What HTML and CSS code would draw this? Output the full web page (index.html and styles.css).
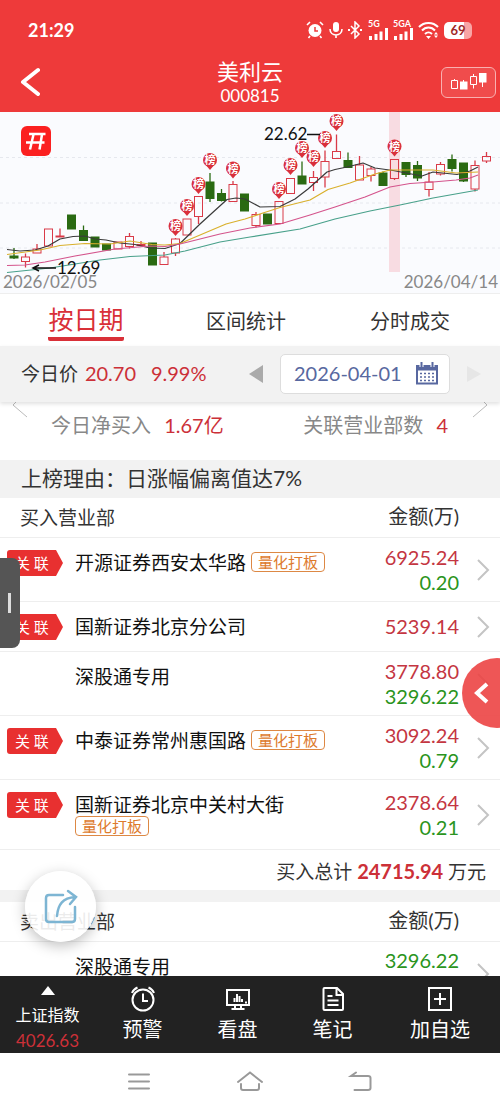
FILE: index.html
```html
<!DOCTYPE html>
<html lang="zh-CN">
<head>
<meta charset="utf-8">
<meta name="viewport" content="width=device-width, initial-scale=1">
<title>美利云 000815</title>
<link rel="stylesheet" href="styles.css">
</head>
<body>
<div class="app">
  <header class="top">
    <div class="status">
      <span class="clock">21:29</span>
      <div class="status-icons">
        <svg width="18" height="18" viewBox="0 0 18 18"><circle cx="9" cy="9.5" r="6.5" fill="#fff"/><path d="M1 4l3-3M17 4l-3-3M4 15l-1.500 2M14 15l1.500 2" stroke="#fff" stroke-width="1.600"/><path d="M9 6v4h3" fill="none" stroke="#ee3a3a" stroke-width="1.500"/></svg>
        <svg width="14" height="18" viewBox="0 0 14 18"><rect x="4" y="1" width="6" height="10" rx="3" fill="#fff"/><path d="M1 8c0 8 12 8 12 0M7 14v3" fill="none" stroke="#fff" stroke-width="1.600"/></svg>
        <svg width="15" height="18" viewBox="0 0 15 18"><path d="M3 5l8 8-4 4V1l4 4-8 8" fill="none" stroke="#fff" stroke-width="1.500"/><path d="M0 9h2M12 9h2" stroke="#fff" stroke-width="2"/></svg>
        <div class="signal"><span>5G</span><svg width="20" height="12" viewBox="0 0 20 12"><path d="M2.500 12V8M8 12V6M13 12V3.500M18.500 12V0" stroke="#fff" stroke-width="3"/></svg></div>
        <div class="signal"><span>5GA</span><svg width="20" height="12" viewBox="0 0 20 12"><path d="M2.500 12V8M8 12V6M13 12V3.500M18.500 12V0" stroke="#fff" stroke-width="3"/></svg></div>
        <svg width="21" height="18" viewBox="0 0 21 18"><path d="M1 6c5-5.500 14-5.500 19 0M4 9.500c3.500-4 9.500-4 13 0M7 13c2-2 5-2 7 0" fill="none" stroke="#fff" stroke-width="2"/><path d="M8 15h5l-2.500 3zM16 13.500l2-2.500 2 2.500zM16 14.500l2 2.500 2-2.500z" fill="#fff"/></svg>
        <span class="battery">69</span>
      </div>
    </div>
    <div class="title-bar">
      <button class="back" aria-label="返回"><svg width="22" height="30" viewBox="0 0 22 30"><path d="M20 3L5 15l15 12" fill="none" stroke="#fff" stroke-width="4" stroke-linecap="round" stroke-linejoin="round"/></svg></button>
      <div class="title">
        <h1>美利云</h1>
        <p>000815</p>
      </div>
      <button class="kline" aria-label="K线"><svg width="38" height="20" viewBox="0 0 38 20"><path d="M1.500 8.500h6v8h-6zM20.500 4.500h6v8h-6zM4.500 7v2M23.500 2v2M23.500 12.500v4M32.500 10v5M13.500 8v2" fill="none" stroke="#fff"/><path d="M10 9.500h7.500v8H10zM29 1h7.500v9.500H29z" fill="#fff"/></svg></button>
    </div>
  </header>

  <svg class="chart" id="chart" viewBox="0 0 500 181">
    <path class="grid" d="M0 45.500H500M0 91H500M0 136H500"/>
    <rect x="389" y="0" width="11" height="160" fill="#f8dce2"/>
    <g id="candles"></g>
    <path class="ma" stroke="#3a3a3a" d="M7 137.500L20 139 35 138 48 134 60 127 73 124.500 85 124 95 127 106 128 120 131 135 132.500 150 136 165 136.500 180 131.500 200 112 227 87.500 236 86 245 87 260 95 280 94.500 295 87 308 77 327 60 335 57.500 347 55 363 51 375 56 393 58.500 422 64 433 60 457 62.500 470 59 478 55"/>
    <path class="ma" stroke="#d9b02c" d="M7 142.500L40 138 60 133.500 85 131.500 110 132 130 129 152 132.500 165 133 180 131.500 226 112 245 107 263 101 280 95.500 310 88 328 77.500 350 71 375 62 390 58 433 58 456 61 478 60"/>
    <path class="ma" stroke="#d4548c" d="M7 153.500L25 153 45 150 75 144 115 137 150 134 165 134.500 180 132 220 122 250 116 280 112 310 103 335 95 365 85 390 75 410 71.500 433 70 456 68 470 66 478 63"/>
    <path class="ma" stroke="#48a08a" d="M7 160.500L50 156 100 148 130 144.500 165 143 185 139 220 130 250 125 300 117 335 107 370 99 400 93 433 86 478 78"/>
    <g id="pins"></g>
    <path d="M307 22.500H320M56 156H34M39 153l-6 3 6 3" fill="none" stroke="#111" stroke-width="1.500"/>
    <text class="mark" x="264" y="28">22.62</text>
    <text class="mark" x="57" y="162">12.69</text>
    <text class="date" x="3" y="176">2026/02/05</text>
    <text class="date" x="498" y="176" text-anchor="end">2026/04/14</text>
    <rect x="21" y="14" width="30" height="30" rx="6" fill="#fb2020"/>
    <path d="M29 22H45.500M26 30.500H44.500M33.500 22.500L30 37.500M42 22.500l-2.500 15" fill="none" stroke="#fff" stroke-width="2.500"/>
  </svg>

  <nav class="tabs">
    <button class="tab active">按日期</button>
    <button class="tab">区间统计</button>
    <button class="tab">分时成交</button>
  </nav>

  <div class="price-bar">
    <span class="today">今日价 <b>20.70</b> <b class="rate">9.99%</b></span>
    <button class="step" aria-label="前一天"><svg width="16" height="20" viewBox="0 0 16 20"><path d="M15 1v18L1 10z" fill="#aaa"/></svg></button>
    <label class="date-box">
      <input type="text" value="2026-04-01" aria-label="日期">
      <svg width="24" height="24" viewBox="0 0 24 24"><path d="M1 3h22v19.500H1z" fill="#5868a0"/><path d="M3 8.500h18v12H3z" fill="#fff"/><path d="M6.500 0v5M17.500 0v5" stroke="#fff" stroke-width="4"/><path d="M6.500 0v5M17.500 0v5" stroke="#5868a0" stroke-width="2"/><path d="M5 11.500h14M5 15h14M5 18.500h14" stroke="#5868a0" stroke-width="1.500" stroke-dasharray="2 2"/></svg>
    </label>
    <button class="step" aria-label="后一天"><svg width="16" height="20" viewBox="0 0 16 20"><path d="M1 2v16l14-8z" fill="#e6e6e6"/></svg></button>
  </div>

  <main class="content">
    <div class="stats">
      <svg width="16" height="16" viewBox="0 0 16 16"><path d="M4 0L1 3l14 12" fill="none" stroke="#bbb"/></svg>
      <span class="net">今日净买入 <b>1.67亿</b></span>
      <span class="count">关联营业部数 <b>4</b></span>
      <svg width="16" height="16" viewBox="0 0 16 16"><path d="M12 0l3 3L1 15" fill="none" stroke="#bbb"/></svg>
    </div>
    <h2 class="reason">上榜理由：日涨幅偏离值达7%</h2>

    <table class="list">
      <colgroup><col class="col-rel"><col><col class="col-amount"><col class="col-more"></colgroup>
      <thead>
        <tr><th colspan="2">买入营业部</th><th class="amount">金额(万)</th><th></th></tr>
      </thead>
      <tbody>
        <tr>
          <td class="rel"><span class="flag">关 联</span></td>
          <td class="name">开源证券西安太华路 <span class="tag">量化打板</span></td>
          <td class="amount"><span class="buy">6925.24</span><span class="sell">0.20</span></td>
          <td class="more"><svg width="14" height="24" viewBox="0 0 14 24"><path d="M2 2l10 10L2 22"/></svg></td>
        </tr>
        <tr class="single">
          <td class="rel"><span class="flag">关 联</span></td>
          <td class="name">国新证券北京分公司</td>
          <td class="amount"><span class="buy">5239.14</span></td>
          <td class="more"><svg width="14" height="24" viewBox="0 0 14 24"><path d="M2 2l10 10L2 22"/></svg></td>
        </tr>
        <tr>
          <td class="rel"></td>
          <td class="name">深股通专用</td>
          <td class="amount"><span class="buy">3778.80</span><span class="sell">3296.22</span></td>
          <td class="more"><svg width="14" height="24" viewBox="0 0 14 24"><path d="M2 2l10 10L2 22"/></svg></td>
        </tr>
        <tr>
          <td class="rel"><span class="flag">关 联</span></td>
          <td class="name">中泰证券常州惠国路 <span class="tag">量化打板</span></td>
          <td class="amount"><span class="buy">3092.24</span><span class="sell">0.79</span></td>
          <td class="more"><svg width="14" height="24" viewBox="0 0 14 24"><path d="M2 2l10 10L2 22"/></svg></td>
        </tr>
        <tr class="wrapped">
          <td class="rel"><span class="flag">关 联</span></td>
          <td class="name">国新证券北京中关村大街 <span class="tag">量化打板</span></td>
          <td class="amount"><span class="buy">2378.64</span><span class="sell">0.21</span></td>
          <td class="more"><svg width="14" height="24" viewBox="0 0 14 24"><path d="M2 2l10 10L2 22"/></svg></td>
        </tr>
      </tbody>
      <tfoot>
        <tr><td class="total" colspan="4">买入总计 <b>24715.94</b> 万元</td></tr>
      </tfoot>
    </table>

    <table class="list sell-list">
      <colgroup><col class="col-rel"><col><col class="col-amount"><col class="col-more"></colgroup>
      <thead>
        <tr><th colspan="2">卖出营业部</th><th class="amount">金额(万)</th><th></th></tr>
      </thead>
      <tbody>
        <tr>
          <td class="rel"></td>
          <td class="name">深股通专用</td>
          <td class="amount"><span class="sell">3296.22</span></td>
          <td class="more"><svg width="14" height="24" viewBox="0 0 14 24"><path d="M2 2l10 10L2 22"/></svg></td>
        </tr>
      </tbody>
    </table>
  </main>

  <footer class="toolbar">
    <button class="index">
      <svg width="14" height="10" viewBox="0 0 14 10"><path d="M7 0l7 9H0z" fill="#fff"/></svg>
      <span>上证指数</span>
      <b>4026.63</b>
    </button>
    <button>
      <svg width="26" height="26" viewBox="0 0 26 26"><circle cx="13" cy="14" r="10.500"/><path d="M13 7.500V15h5M2 7c1-2.500 3-4.500 5.500-5.500M24 7c-1-2.500-3-4.500-5.500-5.500"/></svg>
      <span>预警</span>
    </button>
    <button>
      <svg width="26" height="26" viewBox="0 0 26 26"><path d="M2 4h22v15H2zM6.500 23h13M10 19v4M16 19v4"/><path d="M9.500 16v-4M12 16V8M14.500 16v-6M17 16v-3M20 16.500h2" stroke-width="1.500"/></svg>
      <span>看盘</span>
    </button>
    <button>
      <svg width="26" height="26" viewBox="0 0 26 26"><path d="M3.500 3q0-1 1-1H17l6 6v15q0 1-1 1H4.500q-1 0-1-1zM16.500 2.500V9H23M7.500 10h5M7.500 14.500h11M7.500 19h11"/></svg>
      <span>笔记</span>
    </button>
    <button>
      <svg width="26" height="26" viewBox="0 0 26 26"><path d="M2 2h22v22H2zM13 7v12M7 13h12"/></svg>
      <span>加自选</span>
    </button>
  </footer>

  <div class="sys-nav">
    <button aria-label="任务"><svg width="28" height="28" viewBox="0 0 28 28"><path d="M4 6.500h20M4 13.500h20M4 20.500h20"/></svg></button>
    <button aria-label="主页"><svg width="28" height="28" viewBox="0 0 28 28"><path d="M2 14L14 4.500 26 14M5 16v4q0 2 2 2h14q2 0 2-2v-4"/></svg></button>
    <button aria-label="返回"><svg width="28" height="28" viewBox="0 0 28 28"><path d="M9 4.500L4 8h17q2.500 0 2.500 2v10q0 2-2.500 2H7.500"/></svg></button>
  </div>

  <button class="drawer" aria-label="侧栏"></button>
  <button class="slide" aria-label="展开"><svg width="18" height="24" viewBox="0 0 18 24"><path d="M14 3L4 12l10 9" fill="none" stroke="#fff" stroke-width="4"/></svg></button>
  <button class="share" aria-label="分享"><svg width="36" height="36" viewBox="0 0 36 36"><path d="M20 6H6q-3 0-3 3v21q0 3 3 3h23q3 0 3-3V18M14 27C15 15 20 9 32 8M25 2l8 6-6 7" fill="none" stroke="#7db5d3" stroke-width="2.500" stroke-linecap="round"/></svg></button>
</div>
<script src="chart.js"></script>
</body>
</html>
```
FILE: styles.css
```css
* {
  box-sizing: border-box;
}

body {
  margin: 0;
  background: #fff;
  color: #333;
  font-family: Lato, "Noto Sans CJK SC", sans-serif;
  font-size: 19px;
}

h1, h2, p {
  margin: 0;
  font-weight: 400;
}

b {
  font-weight: 400;
  color: #cc3038;
}

button {
  padding: 0;
  border: none;
  background: none;
  color: inherit;
  font: inherit;
  cursor: pointer;
}

svg {
  display: block;
  flex: none;
}

.app {
  position: relative;
  display: flex;
  flex-direction: column;
  height: 100vh;
  overflow: hidden;
}

/* header */
.top {
  background: #ee3a3a;
  color: #fff;
}

.status {
  display: flex;
  align-items: center;
  justify-content: space-between;
  height: 56px;
  padding: 4px 28px 0;
}

.clock {
  font-size: 18px;
  font-weight: 700;
}

.status-icons {
  display: flex;
  align-items: center;
  gap: 5px;
}

.signal {
  width: 20px;
  font-size: 9px;
  font-weight: 700;
  line-height: 8px;
}

.battery {
  width: 28px;
  height: 17px;
  border-radius: 5px;
  background: linear-gradient(90deg, #fff 70%, #f9a5a5 70%);
  color: #a02828;
  font-size: 13px;
  font-weight: 700;
  line-height: 17px;
  text-align: center;
}

.title-bar {
  display: grid;
  grid-template-columns: 1fr auto 1fr;
  align-items: center;
  height: 56px;
  padding: 0 4px 4px 18px;
}

.back {
  justify-self: start;
}

.title {
  padding: 2px 14px 0 0;
  font-size: 17px;
  line-height: 22px;
  text-align: center;
}

.title h1 {
  font-size: 22px;
  line-height: 26px;
}

.kline {
  display: flex;
  align-items: center;
  justify-content: center;
  justify-self: end;
  width: 55px;
  height: 31px;
  border: 1px solid #f9b0b0;
  border-radius: 6px;
  background: #f04c4c;
}

/* chart */
.chart {
  width: 100%;
  background: #fafbfe;
  border-bottom: 1px solid #eee;
}

.chart .grid {
  stroke: #e6e8ee;
  stroke-dasharray: 3 3;
}

.chart .ma {
  fill: none;
  stroke-width: 1.2;
  stroke-linejoin: round;
}

.chart .mark {
  fill: #111;
  font-size: 17px;
}

.chart .date {
  fill: #888;
  font-size: 17px;
}

.chart .pin {
  fill: #fff;
  font-size: 11px;
  font-weight: 700;
  text-anchor: middle;
}

/* tabs */
.tabs {
  display: grid;
  grid-template-columns: 43fr 37fr 45fr;
  height: 52px;
  flex: none;
}

.tab {
  justify-self: center;
  height: 52px;
  font-size: 20px;
}

.tab.active {
  height: 47px;
  padding-top: 4px;
  border-bottom: 4px solid #d93038;
  border-radius: 2px;
  color: #d93038;
  font-size: 25px;
}

.price-bar {
  position: relative;
  display: flex;
  align-items: center;
  flex: none;
  height: 56px;
  padding: 0 18px 0 21px;
  background: #f2f2f2;
  box-shadow: 0 2px 4px rgba(0, 0, 0, .12);
}

.today {
  flex: 1;
  padding-bottom: 4px;
}

.today b {
  margin-left: 2px;
  font-size: 20px;
}

.today .rate {
  margin-left: 10px;
}

.date-box {
  display: flex;
  align-items: center;
  width: 170px;
  height: 40px;
  margin: 0 16px;
  padding: 0 10px 0 13px;
  border: 1px solid #ddd;
  border-radius: 5px;
  background: #fff;
}

.date-box input {
  flex: 1;
  min-width: 0;
  padding: 0 0 2px;
  border: none;
  outline: none;
  color: #5868a0;
  font: inherit;
  font-size: 20px;
}

/* content */
.content {
  flex: 1;
  min-height: 0;
  overflow: hidden;
}

.stats {
  display: flex;
  height: 58px;
  padding: 0 12px;
  color: #888;
  font-size: 20px;
  line-height: 46px;
}

.net {
  flex: 1;
  padding-left: 23px;
}

.count {
  padding-right: 24px;
}

.stats b {
  margin-left: 8px;
}

.reason {
  height: 38px;
  padding: 0 21px;
  background: #f2f2f2;
  font-size: 21px;
  line-height: 36px;
}

.list {
  width: 100%;
  border-spacing: 0;
  table-layout: fixed;
}

.col-rel {
  width: 75px;
}

.col-amount {
  width: 110px;
}

.col-more {
  width: 41px;
}

.list th {
  height: 39px;
  padding: 0 0 2px 20px;
  font-weight: 400;
  text-align: left;
}

.list td {
  height: 64px;
  padding: 0;
  border-top: 1px solid #eee;
}

.list .single td {
  height: 50px;
}

.list .wrapped td {
  height: 70px;
}

.list .rel {
  padding: 12px 0 0 7px;
  vertical-align: top;
}

.list .name {
  padding-top: 14px;
  color: #111;
  line-height: 22px;
  vertical-align: top;
}

.list .amount {
  font-size: 20px;
  line-height: 25px;
  text-align: right;
}

.list th.amount {
  padding-left: 0;
}

.list .more {
  padding-left: 17px;
}

.more path {
  fill: none;
  stroke: #c4c4c4;
  stroke-width: 2;
}

.buy,
.sell {
  display: block;
  color: #c43642;
}

.sell {
  color: #2a9420;
}

.flag {
  display: block;
  width: 56px;
  height: 26px;
  padding-left: 8px;
  border-radius: 3px;
  background: #e83030;
  clip-path: polygon(0 0, 49px 0, 100% 50%, 49px 100%, 0 100%);
  color: #fff;
  font-size: 15px;
  line-height: 26px;
}

.tag {
  display: inline-block;
  height: 20px;
  padding: 0 6px;
  border: 1px solid #dd8844;
  border-radius: 4px;
  color: #dd7a2c;
  font-size: 15px;
  line-height: 18px;
  vertical-align: top;
}

.list .total {
  height: 41px;
  padding-right: 14px;
  text-align: right;
}

.total b {
  font-size: 20px;
  font-weight: 700;
}

.sell-list {
  border-top: 12px solid #f2f2f2;
}

.sell-list .amount {
  padding-top: 6px;
  vertical-align: top;
}

/* bottom */
.toolbar {
  display: grid;
  grid-template-columns: 19fr 19fr 19fr 19fr 24fr;
  flex: none;
  height: 77px;
  background: #222;
  color: #fff;
  font-size: 20px;
}

.toolbar button {
  display: flex;
  flex-direction: column;
  align-items: center;
  padding-top: 10px;
  line-height: 34px;
}

.toolbar path,
.toolbar circle {
  fill: none;
  stroke: #fff;
  stroke-width: 2;
}

.toolbar .index {
  font-size: 16px;
  line-height: 26px;
}

.toolbar .index span {
  padding-top: 6px;
}

.toolbar .index path {
  fill: #fff;
  stroke: none;
}

.index b {
  font-size: 17px;
}

.sys-nav {
  display: flex;
  align-items: center;
  justify-content: center;
  gap: 83px;
  flex: none;
  height: 58px;
}

.sys-nav path {
  fill: none;
  stroke: #999;
  stroke-width: 2;
  stroke-linecap: round;
}

/* floating controls */
.drawer {
  position: absolute;
  left: 0;
  top: 558px;
  width: 20px;
  height: 90px;
  border-radius: 0 8px 8px 0;
  background: #555;
}

.drawer::after {
  content: "";
  display: block;
  width: 3px;
  height: 20px;
  margin-left: 8px;
  background: #ddd;
}

.slide {
  position: absolute;
  right: -32px;
  top: 658px;
  width: 70px;
  height: 70px;
  padding-left: 11px;
  border-radius: 50%;
  background: rgba(236, 68, 68, .9);
}

.share {
  position: absolute;
  left: 25px;
  top: 871px;
  display: flex;
  align-items: center;
  justify-content: center;
  width: 71px;
  height: 71px;
  border-radius: 50%;
  background: rgba(255, 255, 255, .9);
  box-shadow: 0 4px 14px rgba(0, 0, 0, .25);
}
```
FILE: chart.js
```javascript
// x, high, open/close top, open/close bottom, low, up
var candles = [
  [14, 136, 144, 146, 147, 0], [25.5, 141.5, 145, 149.5, 155.5, 1], [37, 132, 137, 141, 141, 1],
  [48.5, 117, 117, 134, 134, 1], [60, 116.5, 124, 125, 125, 1], [71.5, 103, 103, 117, 117, 0],
  [83.5, 113.5, 118.5, 128.5, 128.5, 0], [95, 125, 125, 135, 135, 0], [106.5, 132, 132, 138, 138, 0],
  [118, 130, 130, 137, 137, 1], [129.5, 121, 124.5, 134.5, 136.5, 1], [141, 129, 132.5, 133.5, 133.5, 1],
  [152.5, 131, 131, 153, 153, 0], [164, 140, 145, 152.5, 152.5, 1], [175.5, 126, 127, 141, 144, 1],
  [187, 107, 107, 123, 123, 1], [198.5, 84.5, 84.5, 104.5, 112, 1], [210, 61, 70, 86.5, 90, 0],
  [221.5, 77, 81.5, 88.5, 89.5, 0], [233, 69, 72.5, 89.5, 90, 1], [244.5, 82, 82, 99, 99, 0],
  [256, 100, 102.5, 113.5, 115.5, 1], [267.5, 102, 102, 112, 112, 0], [279, 89.5, 89.5, 111.5, 111.5, 1],
  [290.5, 66.5, 66.5, 81.5, 81.5, 1], [302, 49.5, 64, 72, 72, 0], [313.5, 59, 65.5, 70.5, 79, 1],
  [325, 38.5, 49.5, 65, 75.5, 1], [336.5, 22.5, 39.5, 46.5, 46.5, 1], [348, 40.5, 48.5, 55.5, 55.5, 0],
  [359.5, 44, 53, 68, 68, 1], [371, 55, 57, 63.5, 69.5, 1], [383, 59.5, 61, 73.5, 73.5, 0],
  [394.5, 47.5, 47.5, 66.5, 68, 1], [406, 50.5, 50.5, 62.5, 65, 0], [417.5, 49, 53.5, 66, 69, 0],
  [429, 60, 70, 77.5, 84.5, 1], [440.5, 50, 52.5, 62, 63.5, 1], [452, 42.5, 47.5, 56.5, 59.5, 0],
  [463.5, 51, 51, 69, 70, 0], [475, 48.5, 53.5, 77, 79.5, 1], [486.5, 40, 44.5, 49, 51, 1]
];
var pins = [
  [175.5, 114], [187, 94], [198.5, 72], [210, 48], [233, 56.5], [279, 77],
  [290.5, 53], [302, 36], [313.5, 45], [325, 26], [336.5, 9], [394.5, 34.5]
];

document.getElementById("candles").innerHTML = candles.map(function (c) {
  var color = c[5] ? "#d93a48" : "#2a6a12";
  return '<path d="M' + c[0] + ' ' + c[1] + 'V' + c[2] + 'M' + c[0] + ' ' + c[3] + 'V' + c[4] + '" stroke="' + color + '" stroke-width="1.3"/>' +
    '<rect x="' + (c[0] - 4) + '" y="' + c[2] + '" width="8" height="' + (c[3] - c[2]) + '" stroke="' + color + '" fill="' + (c[5] ? "none" : color) + '"/>';
}).join("");

document.getElementById("pins").innerHTML = pins.map(function (p) {
  return '<path d="M' + (p[0] - 5) + ' ' + (p[1] + 4) + 'L' + p[0] + ' ' + (p[1] + 10) + 'L' + (p[0] + 5) + ' ' + (p[1] + 4) + 'z" fill="#d9303c"/>' +
    '<circle cx="' + p[0] + '" cy="' + p[1] + '" r="7" fill="#d9303c"/>' +
    '<text class="pin" x="' + p[0] + '" y="' + (p[1] + 4) + '">榜</text>';
}).join("");
```
